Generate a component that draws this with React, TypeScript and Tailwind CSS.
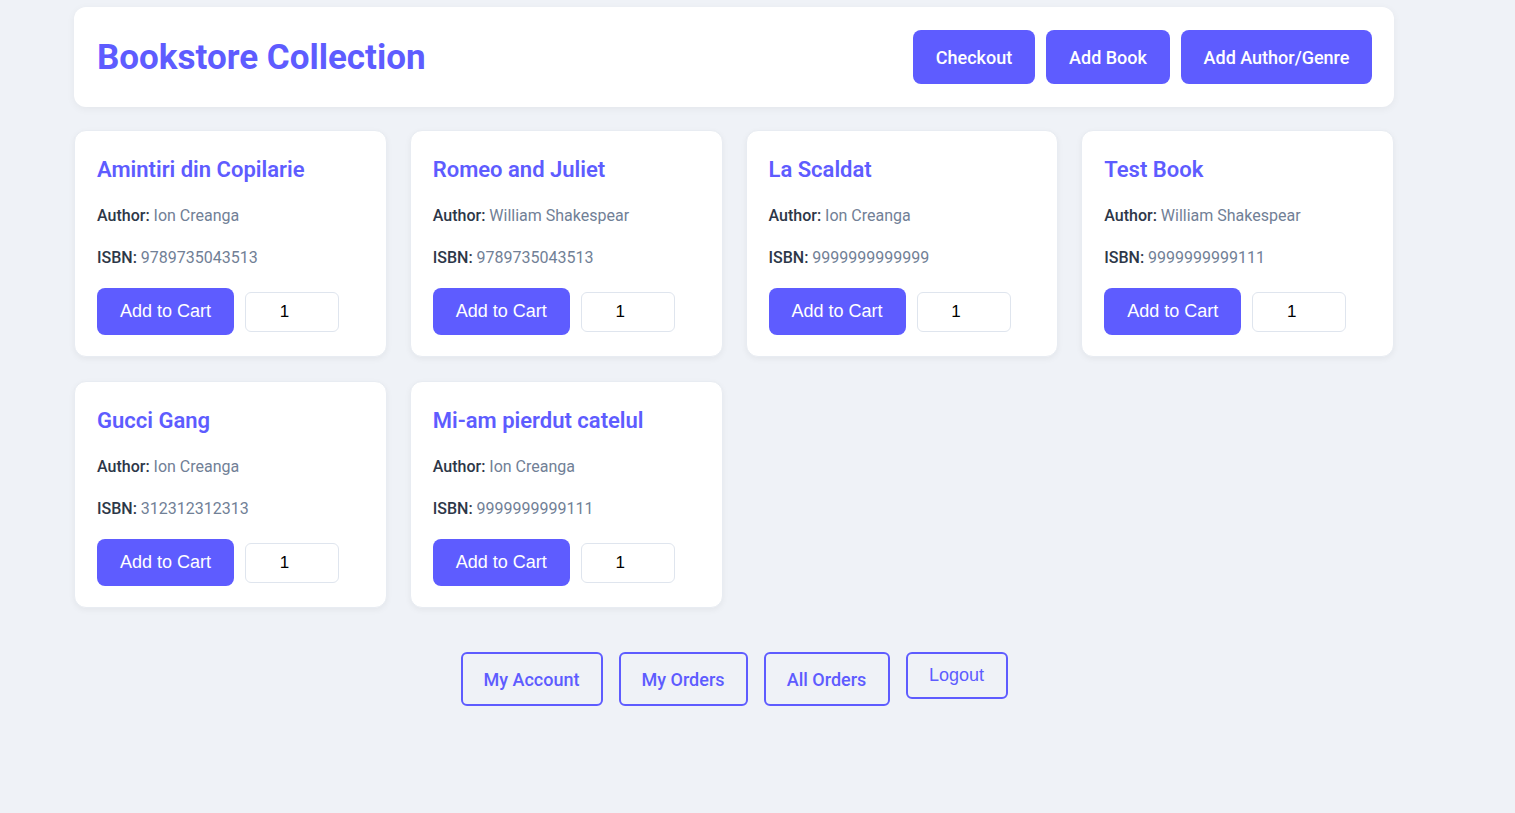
import React from 'react'

const books = [
    { title: 'Amintiri din Copilarie', author: 'Ion Creanga', isbn: '9789735043513' },
    { title: 'Romeo and Juliet', author: 'William Shakespear', isbn: '9789735043513' },
    { title: 'La Scaldat', author: 'Ion Creanga', isbn: '9999999999999' },
    { title: 'Test Book', author: 'William Shakespear', isbn: '9999999999111' },
    { title: 'Gucci Gang', author: 'Ion Creanga', isbn: '312312312313' },
    { title: 'Mi-am pierdut catelul', author: 'Ion Creanga', isbn: '9999999999111' },
]

export default function App() {
    return (
        <div className="w-full min-h-screen bg-[#eff2f7] font-['Roboto',sans-serif]">
            <div className="w-[1320px] ml-[74px] pt-[7px]">
                {/* header */}
                <div className="bg-white rounded-xl shadow-[0_2px_8px_rgba(0,0,0,0.05)] h-[100px] pl-[23px] pr-[22px] flex items-center justify-between">
                    <h1 className="text-[35px] font-bold text-[#5e5cff] pt-[2px]">Bookstore Collection</h1>
                    <div className="flex gap-[11px]">
                        <button className="h-[54px] w-[122px] rounded-lg bg-[#5e5cff] text-white text-[18px] font-medium">Checkout</button>
                        <button className="h-[54px] w-[124px] rounded-lg bg-[#5e5cff] text-white text-[18px] font-medium">Add Book</button>
                        <button className="h-[54px] w-[191px] rounded-lg bg-[#5e5cff] text-white text-[18px] font-medium">Add Author/Genre</button>
                    </div>
                </div>

                {/* books */}
                <div className="grid grid-cols-4 gap-x-[23px] gap-y-[24px] mt-[23px]">
                    {books.map((book, index) => (
                        <div
                            key={index}
                            className="bg-white rounded-xl border border-[#e8ecf2] shadow-[0_2px_6px_rgba(0,0,0,0.05)] h-[227px] px-[22px] pt-[24px]"
                        >
                            <h3 className="text-[22px] leading-[30px] font-semibold text-[#5e5cff]">{book.title}</h3>
                            <p className="mt-[20px] text-[16px] leading-[22px] text-[#718096]">
                                <span className="font-medium text-[#2d3748]">Author:</span> {book.author}
                            </p>
                            <p className="mt-[20px] text-[16px] leading-[22px] text-[#718096]">
                                <span className="font-medium text-[#2d3748]">ISBN:</span> {book.isbn}
                            </p>
                            <div className="flex items-center gap-[11px] mt-[19px]">
                                <button className="h-[47px] w-[137px] rounded-lg bg-[#5e5cff] text-white text-[18px] font-['Liberation_Sans',Arial,sans-serif]">
                                    Add to Cart
                                </button>
                                <input
                                    type="number"
                                    defaultValue={1}
                                    className="h-[40px] w-[94px] rounded-md border border-[#dfe5ee] text-center text-[17px] text-black font-['Liberation_Sans',Arial,sans-serif] [appearance:textfield]"
                                />
                            </div>
                        </div>
                    ))}
                </div>

                {/* footer actions */}
                <div className="flex justify-center items-start gap-[16px] mt-[44px]">
                    <button className="h-[54px] w-[142px] rounded-md border-2 border-[#5e5cff] text-[#5e5cff] text-[18px] font-medium">My Account</button>
                    <button className="h-[54px] w-[129px] rounded-md border-2 border-[#5e5cff] text-[#5e5cff] text-[18px] font-medium">My Orders</button>
                    <button className="h-[54px] w-[126px] rounded-md border-2 border-[#5e5cff] text-[#5e5cff] text-[18px] font-medium">All Orders</button>
                    <button className="h-[47px] w-[102px] rounded-md border-2 border-[#5e5cff] text-[#5e5cff] text-[18px] font-['Liberation_Sans',Arial,sans-serif]">Logout</button>
                </div>
            </div>
        </div>
    )
}
